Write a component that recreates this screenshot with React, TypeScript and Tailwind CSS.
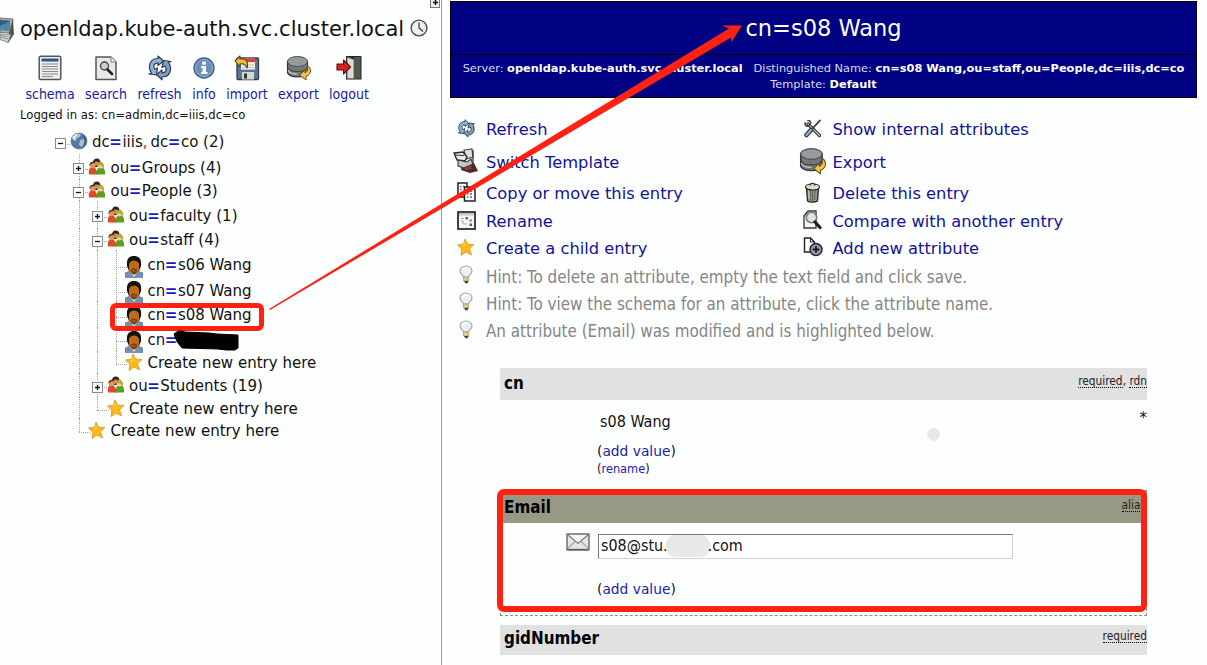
import type { ReactNode } from "react";

const COND = "font-['DejaVu_Sans_Condensed','DejaVu_Sans',sans-serif] [font-stretch:condensed]";

/* ---------- icons ---------- */

function Schema() {
  return (
    <svg width="24" height="26" viewBox="0 0 24 26" fill="none">
      <rect x="1.2" y="1.2" width="21.6" height="23.4" rx="1.5" fill="#eeeeec" stroke="#555753" strokeWidth="1.5" />
      <rect x="3.5" y="3.5" width="17" height="3" fill="#2f5689" />
      <path d="M4 9h16M4 11.5h16M4 14h16M4 16.5h16M4 19h16M4 21.5h11" stroke="#8a8c88" strokeWidth="1" />
    </svg>
  );
}
function Search() {
  return (
    <svg width="24" height="26" viewBox="0 0 24 26" fill="none">
      <path d="M2 2h15l5 5v17.5H2z" fill="#e8e9e6" stroke="#555753" strokeWidth="1.5" strokeLinejoin="round" />
      <path d="M17 2v5h5" fill="#fff" stroke="#777" />
      <circle cx="10.5" cy="11" r="4" fill="#c9d2c8" stroke="#444" strokeWidth="1.4" />
      <path d="M13.5 14.5l4.5 4.5" stroke="#222" strokeWidth="2.6" strokeLinecap="round" />
    </svg>
  );
}
function Refresh({ size = 26 }: { size?: number }) {
  return (
    <svg width={size} height={size} viewBox="0 0 26 26" fill="none">
      <g stroke="#2c3e50" strokeWidth="1.2" strokeLinejoin="round">
        <path d="M4.500 18C0 11 3 3.500 11 3.500V1l5.500 5-5.500 4.500V8C7 8 5.500 11 8 14.500l2.500-1.500-1 7-7.500-1z" fill="#8fb0d0" />
        <path d="M21.500 7.500C26 14 23 22 15 22v2.800L9.500 19.500 15 15v3c4 0 5.500-3.500 3-7l-3 1.500 1.500-7 7.500 1z" fill="#7a9dc2" />
      </g>
    </svg>
  );
}
function Info() {
  return (
    <svg width="24" height="26" viewBox="0 0 24 26">
      <circle cx="12" cy="13" r="10" fill="#6c8fb8" stroke="#40608a" strokeWidth="1.4" />
      <circle cx="12" cy="13" r="8.500" fill="none" stroke="#93afd0" strokeWidth="1" />
      <rect x="10.300" y="6.500" width="3.600" height="3.200" rx=".8" fill="#fff" />
      <path d="M9 11h5v6h1.500v2H9v-2h1.500v-4H9z" fill="#fff" />
    </svg>
  );
}
function Import() {
  return (
    <svg width="26" height="26" viewBox="0 0 26 26">
      <rect x="3" y="3" width="21.500" height="21.500" rx="1" fill="#5b7594" stroke="#333b45" strokeWidth="1.300" />
      <rect x="7" y="3.600" width="14" height="11" fill="#f3f3f1" />
      <rect x="7" y="3.600" width="14" height="3.500" fill="#d8443b" />
      <path d="M8 10h12M8 12.500h12" stroke="#bbb" />
      <rect x="8" y="17" width="12" height="7.500" fill="#d5d7d3" />
      <rect x="10" y="18.500" width="3" height="5" fill="#333" />
      <path d="M1 6l5-5v3c5-1 9 2 7 9-1-3-3-5-7-4v3z" fill="#eebb3d" stroke="#5c4206" strokeWidth="1.100" strokeLinejoin="round" />
    </svg>
  );
}
function Database({ size = 26 }: { size?: number }) {
  return (
    <svg width={size} height={size} viewBox="0 0 26 26">
      <path d="M1.500 6v11c0 3 4.500 5 10 5s10-2 10-5V6z" fill="#74777a" stroke="#303234" strokeWidth="1.200" />
      <path d="M2 15c1 3 5 4 9.500 4" fill="none" stroke="#c8cac8" strokeWidth="1.200" />
      <path d="M2 12.600c1 3 5 4 9.500 4s8.500-1 9.500-4" fill="none" stroke="#3a3c3e" strokeWidth="1" />
      <ellipse cx="11.500" cy="6.500" rx="10" ry="5" fill="#989b9d" stroke="#4c4e50" strokeWidth="1" />
      <path d="M21 10c5 3 5 9-1 11.500V25l-6.500-5 5.500-5v3c2.500-1.500 3.500-4 2-8z" fill="#f0c350" stroke="#6b4d08" strokeWidth="1" strokeLinejoin="round" />
    </svg>
  );
}
function Logout() {
  return (
    <svg width="26" height="26" viewBox="0 0 26 26">
      <rect x="10" y="1" width="15.500" height="23.500" fill="#222722" />
      <path d="M18 2h6.500v21.500H18z" fill="#4c5c4d" />
      <path d="M11 2l7 2.500V24l-7-.5z" fill="#d9dbd7" stroke="#555" strokeWidth=".8" />
      <path d="M1 9h6.500V5l7 7-7 7v-4H1z" fill="#d3261f" stroke="#5e0c09" strokeWidth="1.100" strokeLinejoin="round" />
    </svg>
  );
}
function Clock() {
  return (
    <svg width="18" height="18" viewBox="0 0 18 18" fill="none">
      <circle cx="9" cy="9" r="7.900" fill="#f2f2f0" stroke="#4b4b4b" strokeWidth="1.400" />
      <circle cx="9" cy="9" r="5.800" stroke="#c8c8c8" strokeWidth=".8" strokeDasharray="1 2" />
      <path d="M9 3.500V9l4 3.500" stroke="#333" strokeWidth="1.200" />
    </svg>
  );
}
function Computer() {
  return (
    <svg width="15" height="28" viewBox="0 0 15 28">
      <path d="M0 1l13 1-1 14-12-.5z" fill="#a9aeb0" stroke="#5a5f62" strokeWidth=".8" />
      <path d="M0 3l10 .6-.8 10L0 13z" fill="#2f607f" />
      <path d="M0 9l9.800-5-.6 9.600L0 13z" fill="#4d87a5" />
      <path d="M12.800 2l1.200 15-6 9.500L9 16z" fill="#4e5357" />
      <path d="M0 17l11 .5-3 8-8-3z" fill="#cfd1cf" stroke="#75787a" strokeWidth=".8" />
      <path d="M0 20l8 2M0 18.500l9 1.500" stroke="#8b8e90" strokeWidth=".8" />
    </svg>
  );
}
function Globe() {
  return (
    <svg width="18" height="18" viewBox="0 0 18 18">
      <circle cx="9" cy="9" r="8" fill="#5477a3" stroke="#6b7585" strokeWidth=".8" />
      <path d="M3 5c2-3 5-4 8-3l-1 3-3 1-1 3-3-1zM10 8l4-1 1 3-3 5-3-2z" fill="#a9bdd4" />
      <path d="M2 6a8 8 0 0 1 6-4.500L4 8z" fill="#e6edf4" />
      <path d="M13 3a8 8 0 0 1 0 12c2-4 2-8 0-12z" fill="#2c476d" />
    </svg>
  );
}
function Group() {
  return (
    <svg width="18" height="18" viewBox="0 0 18 18">
      <path d="M5 6c-1-7 8-7 7.500-1v4H5z" fill="#2b2412" />
      <path d="M7 3.500h3.500v4H7z" fill="#c98f56" />
      <path d="M1 16.500C0 11 2 9 5 9s4.500 2 4.500 7.500z" fill="#dd4a29" />
      <path d="M8 16.500C8 11 9.500 9 12.500 9S17.500 11 17 16.500z" fill="#5d9c1d" />
      <circle cx="4.600" cy="7.300" r="3" fill="#d79a63" />
      <path d="M1.500 8C1 3 6 2.500 7 5.500 4 5 3 6 1.500 8z" fill="#6d2d12" />
      <circle cx="12.400" cy="7.500" r="3" fill="#efd29a" />
      <path d="M9.500 8c-1-5 6.500-6.500 6.600 1l-1.200 2c0-3-2-5-5.400-3z" fill="#c0a13c" />
      <path d="M7 10l2 3 1-3z" fill="#f5efe2" />
    </svg>
  );
}
function Person() {
  return (
    <svg width="18" height="23" viewBox="0 0 18 23">
      <path d="M0 22.500V18l5-2h8l5 2v4.500z" fill="#7290b6" stroke="#536d8e" strokeWidth=".6" />
      <path d="M5.500 17.500L9 22l3.500-4.500z" fill="#dbe3ec" />
      <path d="M2 11C1 3 5 1 9 1s8 2 7 10l-2 5H4z" fill="#15110d" />
      <path d="M4 9c1-3 3-3.500 5-3.500S13 6 14 9v5c-1 4-3 5.500-5 5.500S5 18 4 14z" fill="#bd6b1a" />
      <path d="M6 15c1-2 5-2 6 0l-.5 3-2.500 1.500L6.500 18z" fill="#7a3f10" />
      <path d="M7.500 16h3" stroke="#c4782b" />
    </svg>
  );
}
function Star() {
  return (
    <svg width="18" height="18" viewBox="0 0 18 18">
      <path d="M8 1l2.600 5.200 6.400.2-4.400 4.400 2 6.200-5.600-3-5 3.500.8-6.300L.5 7l6-.8z" fill="#f9b91f" stroke="#dc941a" strokeWidth=".8" strokeLinejoin="round" />
      <path d="M8 3l1.500 4.500L5 9z" fill="#fdc838" />
    </svg>
  );
}
function SwitchIcon() {
  return (
    <svg width="26" height="26" viewBox="0 0 26 26">
      <path d="M9 16l12-1 4 8-8 2-9-3z" fill="#4a2a2c" />
      <path d="M10 18l8-1 2 4-8 1z" fill="#a1333b" />
      <path d="M11 2l8-1 1 8-7 2z" fill="#dedfdd" stroke="#484a4b" strokeWidth="1.200" />
      <path d="M1 5l9-1 4 5-2 4-8-1z" fill="#e9eae8" stroke="#292b2c" strokeWidth="1.400" strokeLinejoin="round" />
      <path d="M2 7l9 .5M5 12l9 2 4-3 2 5-9 4-6-2z" fill="#c1c4c3" stroke="#333" strokeWidth="1.100" />
      <path d="M20 2v16M18 19l6 4" stroke="#383838" strokeWidth="1.300" />
    </svg>
  );
}
function Copy() {
  return (
    <svg width="19" height="20" viewBox="0 0 19 20" fill="#fff" stroke="#222" strokeWidth="1.500">
      <path d="M1 1h9v14H1z" />
      <path d="M3 4.500h1.500M6 4.500h1.500M3 7.500h1.500M3 10.500h1.500" stroke="#666" />
      <path d="M7.500 5h8l2.500 2.500V19H7.500z" />
      <path d="M10 9h1.500M13 9h2M10 12h1.500M13 12h2M10 15h1.500M13 15h2" stroke="#666" />
    </svg>
  );
}
function Rename() {
  return (
    <svg width="19" height="19" viewBox="0 0 19 19">
      <rect x="1" y="1" width="17" height="17" fill="#f5f6f4" stroke="#222" strokeWidth="1.700" />
      <path d="M2 2h15v2.500H2z" fill="#bcc7d5" />
      <path d="M4 7.500h3M4 10h2M6 13h4M6 10v3" stroke="#aaa" />
      <path d="M8.500 6h2.500v2.500H8.500z" fill="#c13a36" />
      <path d="M12.500 8.500h2.500v2h-2.500z" fill="#888" />
      <path d="M12.500 12.500h2.500V15h-2.500z" fill="#247d3c" />
    </svg>
  );
}
function Bulb() {
  return (
    <svg width="14" height="19" viewBox="0 0 14 19">
      <path d="M4.500 12C4 9.500 1 9 1 6c0-3 2.600-5 6-5s6 2 6 5c0 3-3 3.500-3.500 6z" fill="#eeeff5" stroke="#a4a4aa" strokeWidth="1.200" />
      <path d="M3.500 5.500C4 3.500 5.500 3 7.500 3" stroke="#fff" strokeWidth="1.800" fill="none" />
      <path d="M4.500 12h5v4h-5z" fill="#dbcf87" stroke="#a1976b" strokeWidth=".7" />
      <path d="M5 16h4.500l-1 2.300h-2z" fill="#3d3d3d" />
    </svg>
  );
}
function Tools() {
  return (
    <svg width="19" height="19" viewBox="0 0 19 19" fill="none" strokeLinecap="round">
      <path d="M5 5l11.500 11.500" stroke="#292b2c" strokeWidth="3.200" />
      <path d="M5 5l11.500 11.500" stroke="#c5c8c6" strokeWidth="1.300" />
      <path d="M2 4c0 3 2 4 4 2.500M5 1.500c3 0 3 2 2 4" stroke="#444" strokeWidth="1.700" />
      <path d="M17 1.500L9 10" stroke="#333" strokeWidth="1.800" />
      <path d="M8 11l-4.500 5" stroke="#26394e" strokeWidth="4.600" />
      <path d="M8 11l-4.500 5" stroke="#91acc5" strokeWidth="2.400" />
    </svg>
  );
}
function Trash() {
  return (
    <svg width="17" height="21" viewBox="0 0 17 21">
      <path d="M2.500 6l1 13c2 1.500 8 1.500 10 0l1-13z" fill="#8e9687" stroke="#22261f" strokeWidth="1.300" />
      <path d="M6 8l.5 10M8.500 8v11M11 8l-.5 10" stroke="#5d6558" strokeWidth="1" />
      <path d="M4.500 8l.7 9" stroke="#d4d8cf" />
      <ellipse cx="8.500" cy="5" rx="7" ry="3" fill="#dfe0d2" stroke="#262a24" strokeWidth="1.200" />
      <path d="M6 3.500c0-3 5-3 5 0" fill="#c6c8bb" stroke="#262a24" strokeWidth="1.100" />
    </svg>
  );
}
function Compare() {
  return (
    <svg width="19" height="20" viewBox="0 0 19 20">
      <path d="M1 6l4-5h8v17H1z" fill="#f4f5f3" stroke="#3b3d3a" strokeWidth="1.400" />
      <circle cx="8.500" cy="7.500" r="5.200" fill="#dce4e4" stroke="#777b78" strokeWidth="1.600" />
      <path d="M12 12l5 5.500" stroke="#1f1f1f" strokeWidth="3.200" strokeLinecap="round" />
    </svg>
  );
}
function AddAttr() {
  return (
    <svg width="20" height="20" viewBox="0 0 20 20">
      <path d="M1.500 1h6l4 4v10h-10z" fill="#fff" stroke="#222" strokeWidth="1.400" />
      <path d="M7.500 1v4h4" fill="none" stroke="#222" />
      <circle cx="13" cy="12.500" r="6" fill="#9691b4" stroke="#262331" strokeWidth="1.500" />
      <path d="M13 9.200v6.600M9.700 12.500h6.600" stroke="#1d1a27" strokeWidth="1.800" />
    </svg>
  );
}
function Mail() {
  return (
    <svg width="24" height="18" viewBox="0 0 24 18">
      <rect x="1" y="1" width="22" height="15.500" fill="#e7e8e6" stroke="#6e706d" strokeWidth="1.500" />
      <path d="M2 15l7.500-7M22 15l-7.500-7" stroke="#a6a8a5" strokeWidth="1.200" />
      <path d="M2 2l10 8.500L22 2" fill="#f7f7f6" stroke="#7c7e7b" strokeWidth="1.300" />
      <path d="M1 17h22" stroke="#555" strokeWidth="1.200" />
    </svg>
  );
}

/* ---------- left frame ---------- */

const tools: { label: string; icon: ReactNode; w: string }[] = [
  { label: "schema", icon: <Schema />, w: "w-[50px]" },
  { label: "search", icon: <Search />, w: "w-[42px]" },
  { label: "refresh", icon: <Refresh />, w: "w-[45px]" },
  { label: "info", icon: <Info />, w: "w-[24px]" },
  { label: "import", icon: <Import />, w: "w-[42px]" },
  { label: "export", icon: <Database />, w: "w-[41px]" },
  { label: "logout", icon: <Logout />, w: "w-[40px]" },
];

function Box({ open }: { open: boolean }) {
  return (
    <span className="relative top-[2px] flex h-[11px] w-[11px] items-center justify-center border border-[#8a8a8a] bg-[#fdfffe]">
      <svg width="7" height="7" viewBox="0 0 7 7" stroke="#111" strokeWidth="1.300">
        <path d={open ? "M1 3.500h5" : "M1 3.500h5M3.500 1v5"} />
      </svg>
    </span>
  );
}

type Mark = "open" | "closed" | "tee" | "end";

function Cell({ mark, first }: { mark: Mark | "line" | "blank"; first?: boolean }) {
  const toggle = mark === "open" || mark === "closed";
  return (
    <span className="relative flex h-full w-[18.500px] shrink-0 items-center justify-center">
      {mark !== "blank" && !first && (
        <span
          className={`absolute left-[9px] top-0 border-l border-dotted border-[#a3a3a3] ${mark === "end" ? "h-[60%]" : "h-full"}`}
        />
      )}
      {mark !== "blank" && mark !== "line" && (
        <span className="absolute left-[9px] right-[-2px] top-[60%] border-t border-dotted border-[#a3a3a3]" />
      )}
      {toggle && <Box open={mark === "open"} />}
    </span>
  );
}

function Row({ h, guides = [], mark, first, icon, children }: {
  h: string;
  guides?: ("line" | "blank")[];
  mark: Mark;
  first?: boolean;
  icon: ReactNode;
  children: ReactNode;
}) {
  return (
    <div className={`flex items-center ${h}`}>
      {guides.map((g, i) => (
        <Cell key={i} mark={g} />
      ))}
      <Cell mark={mark} first={first} />
      <span className="flex w-[18.500px] shrink-0 items-center justify-center">{icon}</span>
      <span className="pl-[4px] whitespace-nowrap">{children}</span>
    </div>
  );
}

const Eq = () => <span className="inline-block w-[12.600px] overflow-visible -indent-[0.500px] font-bold text-[#1a1ab8]">=</span>;

function Tree() {
  return (
    <div className={`mt-[5px] pl-[51px] text-[16.700px] leading-[20px] text-[#111] ${COND}`}>
      <Row h="h-[26px]" mark="open" first icon={<Globe />}>
        dc<Eq />iiis<span className="text-red-600">,</span><span className="pl-[3px]">dc</span><Eq />co (2)
      </Row>
      <Row h="h-[25px]" guides={["blank"]} mark="closed" icon={<Group />}>ou<Eq />Groups (4)</Row>
      <Row h="h-[22px]" guides={["blank"]} mark="open" icon={<Group />}>ou<Eq />People (3)</Row>
      <Row h="h-[27px]" guides={["blank", "line"]} mark="closed" icon={<Group />}>ou<Eq />faculty (1)</Row>
      <Row h="h-[22px]" guides={["blank", "line"]} mark="open" icon={<Group />}>ou<Eq />staff (4)</Row>
      <Row h="h-[28px]" guides={["blank", "line", "line"]} mark="tee" icon={<PersonSlot />}>cn<Eq />s06 Wang</Row>
      <Row h="h-[23px]" guides={["blank", "line", "line"]} mark="tee" icon={<PersonSlot />}>cn<Eq />s07 Wang</Row>
      <Row h="h-[26px]" guides={["blank", "line", "line"]} mark="tee" icon={<PersonSlot />}>cn<Eq />s08 Wang</Row>
      <Row h="h-[24px]" guides={["blank", "line", "line"]} mark="tee" icon={<PersonSlot />}>cn<Eq /></Row>
      <Row h="h-[22px]" guides={["blank", "line", "line"]} mark="end" icon={<Star />}>Create new entry here</Row>
      <Row h="h-[24px]" guides={["blank", "line"]} mark="closed" icon={<Group />}>ou<Eq />Students (19)</Row>
      <Row h="h-[21px]" guides={["blank", "line"]} mark="end" icon={<Star />}>Create new entry here</Row>
      <Row h="h-[23px]" guides={["blank"]} mark="end" icon={<Star />}>Create new entry here</Row>
    </div>
  );
}

function PersonSlot() {
  return (
    <span className="relative top-[2px] block">
      <Person />
    </span>
  );
}

function Sidebar() {
  return (
    <aside className="h-full w-[441px] shrink-0 overflow-hidden">
      <div className="flex h-[8px] justify-end pr-[1px]">
        <span className="-mt-[3px] flex h-[11px] w-[10px] items-center justify-center border border-[#777] bg-[#eef0ee]">
          <svg width="7" height="7" viewBox="0 0 7 7" stroke="#111" strokeWidth="1.500">
            <path d="M1 3.500h5M3.500 1v5" />
          </svg>
        </span>
      </div>
      <div className="flex h-[42px] items-center">
        <div className="w-[20px] shrink-0 pt-[3px]"><Computer /></div>
        <h1 className="w-[390px] shrink-0 whitespace-nowrap text-[21px] leading-[26px]">openldap.kube-auth.svc.cluster.local</h1>
        <span className="pb-[2px]"><Clock /></span>
      </div>
      <div className={`flex gap-[10px] pl-[25px] pt-[5px] text-[14px] leading-[18px] text-[#1a1aa6] ${COND}`}>
        {tools.map((t) => (
          <div key={t.label} className={`flex flex-col items-center ${t.w}`}>
            <span className="flex h-[30px] items-start">{t.icon}</span>
            <span className="whitespace-nowrap">{t.label}</span>
          </div>
        ))}
      </div>
      <div className="mt-[4px] pl-[20px] text-[11.650px] leading-[16px]">Logged in as: cn=admin,dc=iiis,dc=co</div>
      <Tree />
    </aside>
  );
}

/* ---------- right frame ---------- */

const actions: { h: string; left: [ReactNode, string]; right: [ReactNode, string] }[] = [
  { h: "h-[35px]", left: [<Refresh size={19} />, "Refresh"], right: [<Tools />, "Show internal attributes"] },
  { h: "h-[31px]", left: [<SwitchIcon />, "Switch Template"], right: [<Database size={28} />, "Export"] },
  { h: "h-[31px]", left: [<Copy />, "Copy or move this entry"], right: [<Trash />, "Delete this entry"] },
  { h: "h-[25px]", left: [<Rename />, "Rename"], right: [<Compare />, "Compare with another entry"] },
  { h: "h-[29px]", left: [<Star />, "Create a child entry"], right: [<AddAttr />, "Add new attribute"] },
];

const hints = [
  "Hint: To delete an attribute, empty the text field and click save.",
  "Hint: To view the schema for an attribute, click the attribute name.",
  "An attribute (Email) was modified and is highlighted below.",
];

function Action({ item, w }: { item: [ReactNode, string]; w: string }) {
  return (
    <div className={`flex items-center ${w}`}>
      <span className="flex h-[28px] w-[28px] shrink-0 items-center justify-center pb-[3px]">{item[0]}</span>
      <a className="pl-[6px] whitespace-nowrap text-[16.300px] leading-[22px] text-[#12129a]">{item[1]}</a>
    </div>
  );
}

function Bar({ name, className, children }: { name: string; className: string; children: ReactNode }) {
  return (
    <div className={`flex justify-between pl-[4px] ${className} ${COND}`}>
      <b className="text-[16.900px] leading-[20px] text-black">{name}</b>
      <span className="text-[11.800px] leading-[17px] text-[#222]">{children}</span>
    </div>
  );
}

const Abbr = ({ children }: { children: ReactNode }) => (
  <span className="inline-block border-b border-dotted border-black leading-[12px]">{children}</span>
);

const Link = ({ children }: { children: string }) => (
  <>(<a className="text-[#1c1ca4]">{children}</a>)</>
);

function Main() {
  return (
    <main className="flex h-full min-w-0 flex-1 flex-col border-l border-[#9c9cb8] pl-[8px] pr-[10px] pt-[1px]">
      <header className="h-[97px] shrink-0 border border-black bg-[#000083] text-center text-white">
        <div className="flex h-[53px] items-center justify-center border-b border-black pt-[2px] text-[22.500px]">cn=s08 Wang</div>
        <div className="pt-[6px] text-[11.350px] leading-[15.500px] text-[#dcdcf5]">
          <div className="flex justify-center whitespace-nowrap">
            <span>Server: <b className="text-white">openldap.kube-auth.svc.cluster.local</b></span>
            <span className="ml-[11px]">Distinguished Name: <b className="text-white">cn=s08 Wang,ou=staff,ou=People,dc=iiis,dc=co</b></span>
          </div>
          <div>Template: <b className="text-white">Default</b></div>
        </div>
      </header>

      <div className="mt-[14px] shrink-0 pl-[2px]">
        {actions.map((a) => (
          <div key={a.left[1]} className={`flex items-center ${a.h}`}>
            <Action item={a.left} w="w-[346.500px]" />
            <Action item={a.right} w="flex-1" />
          </div>
        ))}
        {hints.map((t) => (
          <div key={t} className="flex h-[27.300px] items-center">
            <span className="flex w-[28px] shrink-0 justify-center pb-[4px]"><Bulb /></span>
            <span className={`whitespace-nowrap pl-[6px] text-[16.850px] leading-[22px] text-[#858585] ${COND}`}>{t}</span>
          </div>
        ))}
      </div>

      <div className="ml-[50px] mr-[50px] mt-[23px] shrink-0">
        <Bar name="cn" className="h-[32px] bg-[#e1e1e1] pt-[5px]"><Abbr>required</Abbr>, <Abbr>rdn</Abbr></Bar>
        <div className="flex h-[90px] justify-between pl-[97px] pt-[12px]">
          <div>
            <div className={`pl-[3px] text-[16px] leading-[20px] ${COND}`}>s08 Wang</div>
            <div className="mt-[9px] text-[13.800px] leading-[20px]"><Link>add value</Link></div>
            <div className="text-[11.400px] leading-[16px]"><Link>rename</Link></div>
          </div>
          <span className="-mt-[3px] text-[15px] leading-[18px]">*</span>
        </div>
        <section className="relative h-[126px] border-x border-b border-dashed border-[#8c8e80]">
          <Bar name="Email" className="-mx-px h-[33px] bg-[#989985] pr-[1px] pt-[7px]"><Abbr>alias</Abbr></Bar>
          <div className="flex items-start pl-[65px] pt-[11px]">
            <span className="-mt-px"><Mail /></span>
            <div className={`ml-[8px] flex h-[25px] w-[415px] items-center border border-[#d0d0d0] border-l-[#777] border-t-[#777] bg-white pl-[2px] text-[15.900px] ${COND}`}>
              <span>s08@stu.</span>
              <span className="-ml-[2px] h-[22px] w-[44px] rounded-[9px] bg-[#e8e8e8]" />
              <span className="-ml-[2px]">.com</span>
            </div>
          </div>
          <div className="pl-[96px] pt-[20px] text-[13.800px] leading-[20px]"><Link>add value</Link></div>
        </section>
        <Bar name="gidNumber" className="mt-[9px] h-[30px] bg-[#e1e1e1] pt-[3px]"><Abbr>required</Abbr></Bar>
      </div>
    </main>
  );
}

/* ---------- annotations drawn over both frames ---------- */

function Annotations() {
  return (
    <div className="pointer-events-none absolute inset-0">
      <div className="absolute left-[110px] top-[303px] h-[28px] w-[154px] rounded-[6px] border-[5px] border-[#ff2213]" />
      <div className="absolute left-[497px] top-[489px] h-[123px] w-[650px] rounded-[7px] border-[6px] border-[#ff2213]" />
      <div className="absolute left-[927px] top-[428px] h-[13px] w-[13px] rounded-full bg-[#e8e8e8]" />
      <svg className="absolute inset-0" width="1207" height="665" viewBox="0 0 1207 665">
        <path d="M174 334q5-5 11-2l24 1 8 1 21 1v13l-3 2h-9l-8-1-36-1q-6-6-8-14z" fill="#000" stroke="#000" strokeLinejoin="round" />
        <path d="M269 309L729 28.500L722 25.500L742 25.500L731.500 42L731 37.500L270 310z" fill="#ff2213" />
      </svg>
    </div>
  );
}

export default function App() {
  return (
    <div className="relative flex h-[665px] w-[1207px] overflow-hidden bg-[#fdfffe] font-['DejaVu_Sans',sans-serif] text-[#111]">
      <Sidebar />
      <Main />
      <Annotations />
    </div>
  );
}
